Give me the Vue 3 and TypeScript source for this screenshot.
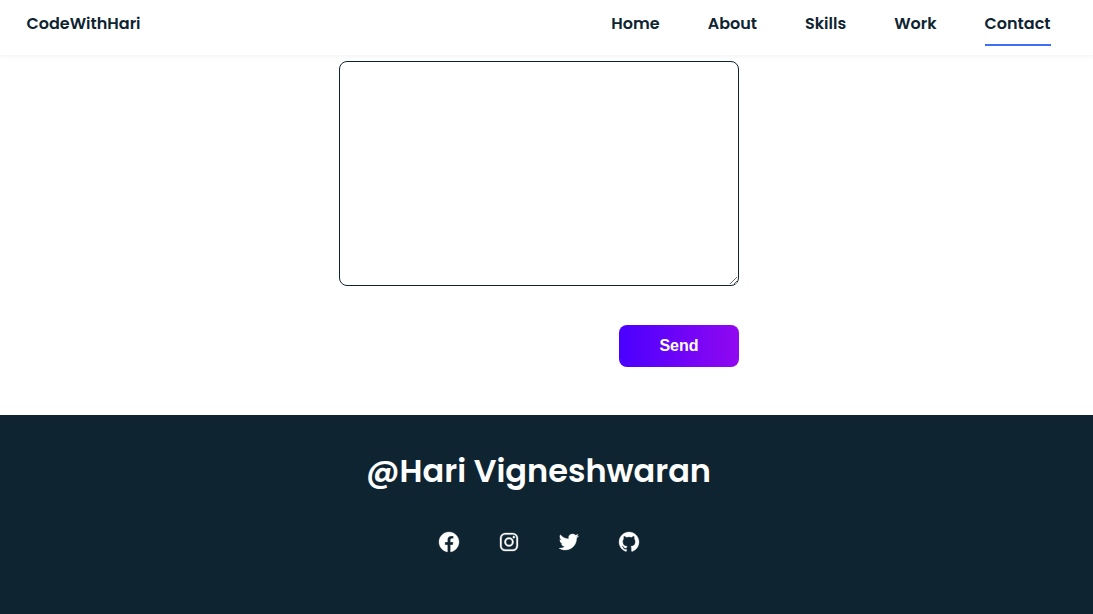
<script setup lang="ts">
import { ref } from 'vue'

interface NavItem {
  label: string
  id: string
}

interface SocialLink {
  name: string
  path: string
}

const navItems: NavItem[] = [
  { label: 'Home', id: 'home' },
  { label: 'About', id: 'about' },
  { label: 'Skills', id: 'skills' },
  { label: 'Work', id: 'work' },
  { label: 'Contact', id: 'contact' },
]

const active = ref('contact')
const message = ref('')

const socials: SocialLink[] = [
  {
    name: 'Facebook',
    path: 'M12.001 2.002c-5.522 0-9.999 4.477-9.999 9.999 0 4.99 3.656 9.126 8.437 9.879v-6.988h-2.54v-2.891h2.54V9.798c0-2.508 1.493-3.891 3.776-3.891 1.094 0 2.24.195 2.24.195v2.459h-1.264c-1.24 0-1.628.772-1.628 1.563v1.875h2.771l-.443 2.891h-2.328v6.988C18.344 21.129 22 16.992 22 12.001c0-5.522-4.477-9.999-9.999-9.999z',
  },
  {
    name: 'Instagram',
    path: 'M8.2 3h7.6A5.2 5.2 0 0 1 21 8.2v7.6a5.2 5.2 0 0 1-5.2 5.2H8.2A5.2 5.2 0 0 1 3 15.8V8.2A5.2 5.2 0 0 1 8.2 3zM8.3 4.62A3.68 3.68 0 0 0 4.62 8.3v7.4a3.68 3.68 0 0 0 3.68 3.68h7.4a3.68 3.68 0 0 0 3.68-3.68V8.3a3.68 3.68 0 0 0-3.68-3.68zM12 7.38a4.62 4.62 0 1 1 0 9.24 4.62 4.62 0 0 1 0-9.24zm0 1.62a3 3 0 1 0 0 6 3 3 0 0 0 0-6zM16.8 6.12a1.08 1.08 0 1 1 0 2.16 1.08 1.08 0 0 1 0-2.16z',
  },
  {
    name: 'Twitter',
    path: 'M19.633 7.997c.013.175.013.349.013.523 0 5.325-4.053 11.461-11.46 11.461-2.282 0-4.402-.661-6.186-1.809.324.037.636.05.973.05a8.07 8.07 0 0 0 5.001-1.721 4.036 4.036 0 0 1-3.767-2.793c.249.037.499.062.761.062.361 0 .724-.05 1.061-.137a4.027 4.027 0 0 1-3.23-3.953v-.05c.537.299 1.16.486 1.82.511a4.022 4.022 0 0 1-1.796-3.354c0-.748.199-1.434.548-2.032a11.457 11.457 0 0 0 8.306 4.215c-.062-.3-.1-.611-.1-.923a4.026 4.026 0 0 1 4.028-4.028c1.16 0 2.207.486 2.943 1.272a7.957 7.957 0 0 0 2.556-.973 4.02 4.02 0 0 1-1.771 2.22 8.073 8.073 0 0 0 2.319-.624 8.645 8.645 0 0 1-2.019 2.083z',
  },
  {
    name: 'GitHub',
    path: 'M12.026 2c-5.509 0-9.974 4.465-9.974 9.974 0 4.406 2.857 8.145 6.821 9.465.499.09.679-.217.679-.481 0-.237-.008-.865-.011-1.696-2.775.602-3.361-1.338-3.361-1.338-.452-1.152-1.107-1.459-1.107-1.459-.905-.619.069-.605.069-.605 1.002.07 1.527 1.028 1.527 1.028.89 1.524 2.336 1.084 2.902.829.091-.645.351-1.085.635-1.334-2.214-.251-4.542-1.107-4.542-4.93 0-1.087.389-1.979 1.024-2.675-.101-.253-.446-1.268.099-2.64 0 0 .837-.269 2.742 1.021a9.582 9.582 0 0 1 2.496-.336 9.554 9.554 0 0 1 2.496.336c1.906-1.291 2.742-1.021 2.742-1.021.545 1.372.203 2.387.099 2.64.64.696 1.024 1.587 1.024 2.675 0 3.833-2.33 4.675-4.552 4.922.355.308.675.916.675 1.846 0 1.334-.012 2.41-.012 2.737 0 .267.178.577.687.479C19.146 20.115 22 16.379 22 11.974 22 6.465 17.535 2 12.026 2z',
  },
]
</script>

<template>
  <div class="page">
    <header class="header">
      <nav class="nav" aria-label="Main">
        <a href="#" class="logo">CodeWithHari</a>
        <ul class="menu">
          <li v-for="item in navItems" :key="item.id">
            <a
              :href="'#' + item.id"
              class="link"
              :class="{ active: active === item.id }"
              @click="active = item.id"
            >{{ item.label }}</a>
          </li>
        </ul>
      </nav>
    </header>

    <main class="main">
      <form class="form" @submit.prevent>
        <textarea v-model="message" class="message" aria-label="Message"></textarea>
        <button type="submit" class="send">Send</button>
      </form>
    </main>

    <footer class="footer">
      <p class="title">@Hari Vigneshwaran</p>
      <div class="socials">
        <a v-for="s in socials" :key="s.name" href="#" class="social" :aria-label="s.name">
          <svg viewBox="0 0 24 24" aria-hidden="true"><path fill-rule="evenodd" :d="s.path" /></svg>
        </a>
      </div>
    </footer>
  </div>
</template>

<style>
body {
  margin: 0;
  background: #fff;
}
</style>

<style scoped>
.page {
  --ink: #0e2431;
  --gutter: 16px;
  display: flex;
  flex-direction: column;
  min-height: 100vh;
  color: var(--ink);
  font-family: Poppins, Inter, sans-serif;
  font-weight: 600;
}

.header {
  position: relative;
  padding-right: var(--gutter);
  background: #fff;
  box-shadow: 0 1px 4px rgba(146, 161, 176, 0.15);
}

.nav {
  display: flex;
  justify-content: space-between;
  max-width: 1024px;
  margin: 0 auto;
  padding-bottom: 9px;
}

.logo,
.link {
  padding-top: 12px;
  color: var(--ink);
  font-size: 16px;
  line-height: 24px;
  text-decoration: none;
}

.menu {
  display: flex;
  gap: 48px;
  margin: 0;
  padding: 0;
  list-style: none;
}

.link {
  display: block;
  padding-bottom: 8px;
  border-bottom: 2px solid transparent;
}

.link.active {
  border-bottom-color: #3e6ff4;
}

.main {
  padding: 6px 15px 48px 0;
}

.form {
  display: flex;
  flex-direction: column;
  max-width: 400px;
  margin: 0 auto;
}

.message {
  box-sizing: border-box;
  width: 100%;
  height: 225px;
  margin: 0 0 39px;
  padding: 16px;
  border: 1px solid var(--ink);
  border-radius: 8px;
  outline: none;
  background: #fff;
  color: var(--ink);
  font: 16px/24px Inter, sans-serif;
  resize: both;
}

.send {
  align-self: flex-end;
  width: 120px;
  height: 42px;
  padding: 0;
  border: none;
  border-radius: 8px;
  background: linear-gradient(to right, #4a00ff, #9108f0);
  color: #fff;
  font: bold 16px "Liberation Sans", Arial, sans-serif;
  cursor: pointer;
}

.footer {
  flex: 1;
  padding: 32px var(--gutter) 32px 0;
  background: #0e2431;
  color: #fff;
  text-align: center;
}

.title {
  margin: 0 0 35px;
  font-size: 32px;
  line-height: 48px;
}

.socials {
  display: flex;
  justify-content: center;
  gap: 36px;
}

.social {
  width: 24px;
  height: 24px;
  color: #fff;
}

.social svg {
  display: block;
  width: 24px;
  height: 24px;
  fill: currentColor;
  stroke: currentColor;
  stroke-width: 0.3;
}
</style>
